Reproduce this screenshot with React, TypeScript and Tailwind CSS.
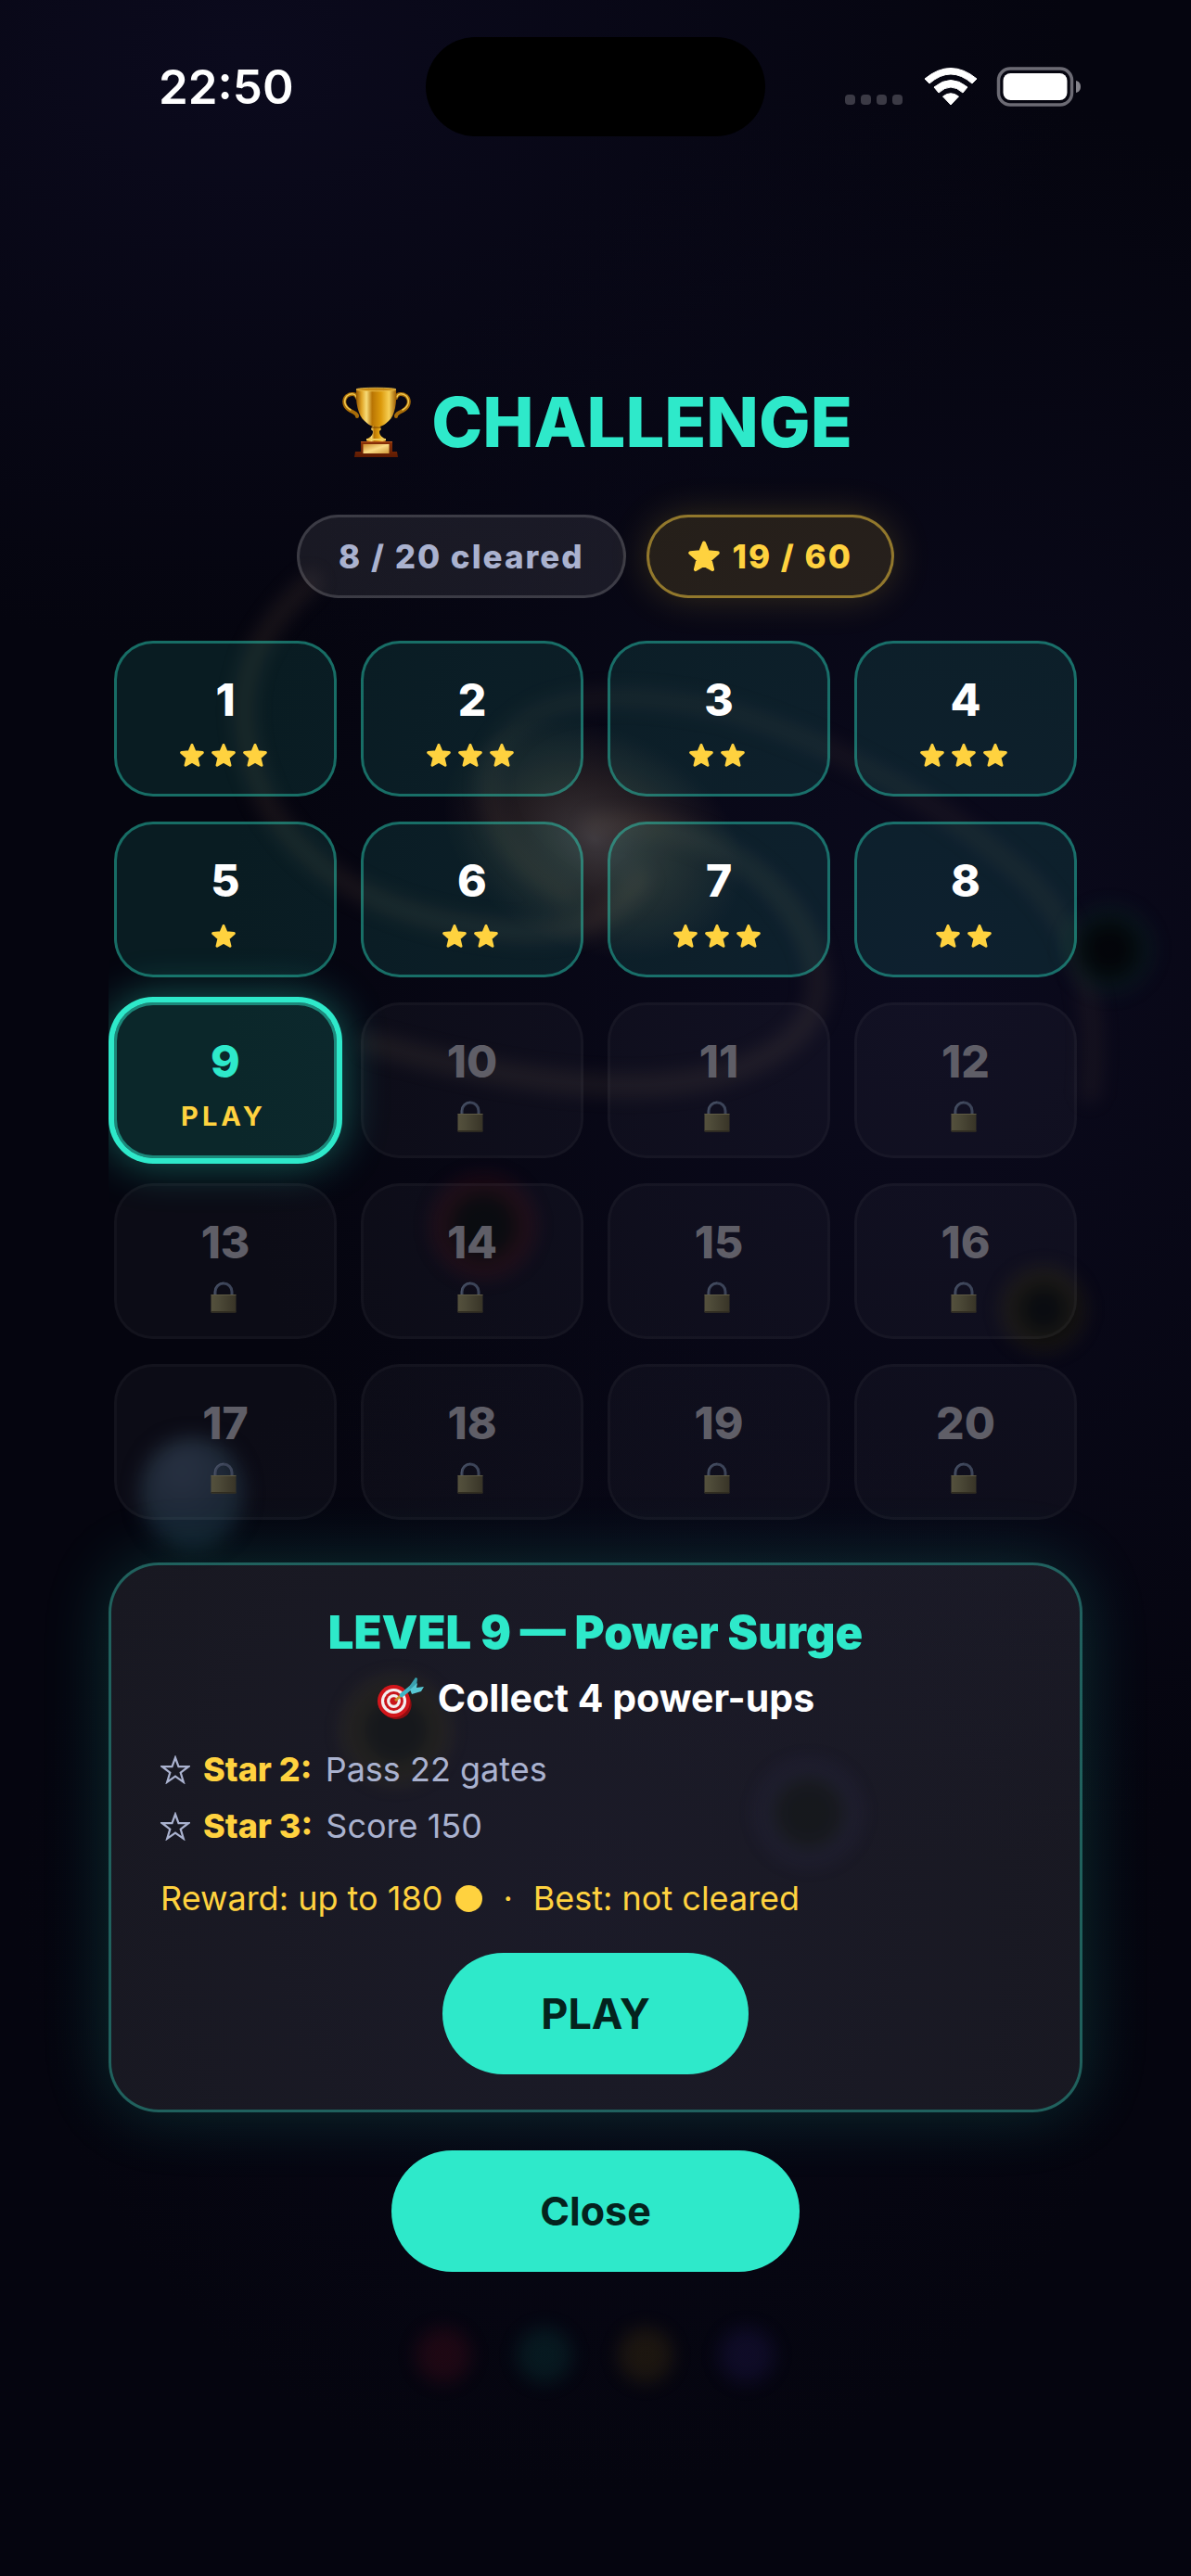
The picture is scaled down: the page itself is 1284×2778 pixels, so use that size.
import { useState } from "react";

type Level = { id: number; stars: number };

const TOTAL_LEVELS = 20;
const CURRENT_LEVEL = 9;
const STARS = [3, 3, 2, 3, 1, 2, 3, 2];

const levels: Level[] = Array.from({ length: TOTAL_LEVELS }, (_, i) => ({
  id: i + 1,
  stars: STARS[i] ?? 0,
}));

const bonusStars = [
  { label: "Star 2:", goal: "Pass 22 gates" },
  { label: "Star 3:", goal: "Score 150" },
];

function StarIcon({ className }: { className: string }) {
  return (
    <svg viewBox="0 0 26 25" className={className} aria-hidden="true">
      <path
        d="M13 1.500l3 7.300 8.300.8-6.300 5.600 2 8.100-7-4-7 4 2-8.100-6.300-5.600 8.300-.8z"
        fill="#ffd23f"
        stroke="#ffd23f"
        strokeWidth="3"
        strokeLinejoin="round"
      />
    </svg>
  );
}

function StarOutline() {
  return (
    <svg viewBox="0 0 32 31" className="h-[31px] w-8 shrink-0" aria-hidden="true">
      <path
        d="M16 2.5l3.5 9.6 10.6.1-8.4 6.4 3.1 10.2L16 22.7l-8.8 6.1 3.1-10.2-8.4-6.4 10.6-.1z"
        fill="none"
        stroke="#aab2cf"
        strokeWidth="2.2"
        strokeLinejoin="miter"
      />
    </svg>
  );
}

function LockIcon() {
  return (
    <svg viewBox="0 0 28 34" className="h-[34px] w-7" role="img" aria-label="Locked">
      <defs>
        <linearGradient id="lock-body" x1="0" x2="1" y1="0" y2="0">
          <stop offset="0" stopColor="#55513d" />
          <stop offset="0.3" stopColor="#4d4a38" />
          <stop offset="1" stopColor="#383427" />
        </linearGradient>
      </defs>
      <path d="M5 16v-5a9 9 0 0 1 18 0v5" fill="none" stroke="#3c4458" strokeWidth="3" />
      <path d="M4.300 15v-4a9.700 9.700 0 0 1 9.700-9.700" fill="none" stroke="#4b5468" strokeWidth="1" />
      <rect x="0.500" y="14" width="27" height="19.500" rx="1" fill="url(#lock-body)" />
      <rect x="0.500" y="32" width="27" height="1.500" fill="#302c20" />
      <rect x="0.500" y="14" width="27" height="1" fill="#5e5a44" />
    </svg>
  );
}

function TrophyIcon() {
  return (
    <svg viewBox="0 0 92 92" className="h-[92px] w-[92px]" aria-hidden="true">
      <defs>
        <linearGradient id="cup" x1="0" x2="1" y1="0" y2="0">
          <stop offset="0" stopColor="#8f5200" />
          <stop offset="0.14" stopColor="#e0a425" />
          <stop offset="0.26" stopColor="#f8dc78" />
          <stop offset="0.4" stopColor="#b87404" />
          <stop offset="0.62" stopColor="#dc9a0c" />
          <stop offset="0.82" stopColor="#f6cf55" />
          <stop offset="1" stopColor="#9a5a02" />
        </linearGradient>
        <linearGradient id="wood" x1="0" x2="0" y1="0" y2="1">
          <stop offset="0" stopColor="#8a3208" />
          <stop offset="1" stopColor="#5c1a02" />
        </linearGradient>
        <linearGradient id="plate" x1="0" x2="1" y1="0" y2="1">
          <stop offset="0" stopColor="#c98a2c" />
          <stop offset="0.5" stopColor="#fbdc86" />
          <stop offset="1" stopColor="#d29a3c" />
        </linearGradient>
      </defs>
      <g fill="none" strokeLinecap="round">
        <path d="M24 20c-1-5-7-5-11-2-5 5-3 12 4 16 4 2 7 3 7 6" stroke="#a86c08" strokeWidth="4" />
        <path d="M66 20c1-5 7-5 11-2 5 5 3 12-4 16-4 2-7 3-7 6" stroke="#a86c08" strokeWidth="4" />
        <path d="M23 19c-1-4-6-4-10-1-4 5-3 11 4 15" stroke="#f0c84e" strokeWidth="1.500" />
        <path d="M67 19c1-4 6-4 10-1 4 5 3 11-4 15" stroke="#f0c84e" strokeWidth="1.500" />
      </g>
      <path d="M23 11h43c1 14-1 28-8 34-4 4-7 5-9 6h-8c-2-1-5-2-9-6-7-6-10-20-9-34z" fill="url(#cup)" />
      <ellipse cx="44.500" cy="11" rx="21.500" ry="1.800" fill="#c98a14" stroke="#f0c550" strokeWidth="0.800" />
      <path d="M41 50h7l2 4-2 2c0 4 2 6 6 8l1 4H34l1-4c4-2 6-4 6-8l-2-2z" fill="url(#cup)" />
      <path d="M39 52h11" stroke="#7a4702" strokeWidth="1" />
      <path d="M34 65h21" stroke="#f2cc5c" strokeWidth="2" />
      <path d="M28 67h34v11h5l1 6H21l1-6h6z" fill="url(#wood)" />
      <path d="M28 67.500h34" stroke="#b4531c" strokeWidth="1" />
      <rect x="30.500" y="70" width="28" height="10" fill="url(#plate)" />
    </svg>
  );
}

function TargetIcon() {
  return (
    <svg viewBox="0 0 52 46" className="h-[46px] w-[52px]" aria-hidden="true">
      <ellipse cx="20" cy="29" rx="18" ry="16.500" transform="rotate(30 20 29)" fill="#8f0d10" />
      <circle cx="18.500" cy="26.500" r="17.500" fill="#d2161b" />
      <circle cx="18.500" cy="26.500" r="13.600" fill="#f3eeee" />
      <circle cx="18.500" cy="26.500" r="10.400" fill="#c9151a" />
      <circle cx="18.500" cy="26.500" r="7.400" fill="#f3eeee" />
      <circle cx="18.500" cy="26.500" r="4.200" fill="#c9151a" />
      <path d="M20 26l9-8" stroke="#c8912a" strokeWidth="3" />
      <path d="M27 20l11-9" stroke="#3fb6c6" strokeWidth="4.500" strokeLinecap="round" />
      <path d="M35 11l7-10 2 1-1 8-6 5z" fill="#3aa0ae" />
      <path d="M36 14l8-7-1 5 8-1-3 5-10 3z" fill="#56c8d4" />
    </svg>
  );
}

function StatusIcons() {
  return (
    <div className="flex items-center">
      <div className="mt-7 flex gap-1.5 pr-6 [&>i]:h-[11px] [&>i]:w-[11px] [&>i]:rounded [&>i]:bg-[#3b3a45]">
        <i />
        <i />
        <i />
        <i />
      </div>
      <svg viewBox="0 0 168 44" className="h-11 w-[168px]" role="img" aria-label="Wi-Fi, battery full">
        <path d="M0 13Q28-10 56 13l-5 5Q28-2 5 18z" fill="#fff" stroke="#fff" strokeWidth="1" strokeLinejoin="round" />
        <path d="M10 22Q28 7 46 22l-5 6Q28 16 15 28z" fill="#fff" stroke="#fff" strokeWidth="1" strokeLinejoin="round" />
        <path d="M19.500 32Q28 25.500 36.500 32L28 41z" fill="#fff" stroke="#fff" strokeWidth="1" strokeLinejoin="round" />
        <rect x="79.500" y="2" width="79" height="39" rx="12.500" fill="none" stroke="#6c6b74" strokeWidth="3.500" />
        <rect x="84.500" y="7" width="69" height="29" rx="8" fill="#fff" />
        <path d="M163 15c4 1 5 4 5 6.500s-1 5.500-5 6.500z" fill="#84838b" />
      </svg>
    </div>
  );
}

const orbs = [
  { x: 1196, y: 1024, r: 38, color: "#0f6b55", alpha: 0.12 },
  { x: 521, y: 1322, r: 46, color: "#8a1424", alpha: 0.17 },
  { x: 1125, y: 1412, r: 36, color: "#6b5a14", alpha: 0.16 },
  { x: 427, y: 1866, r: 48, color: "#6b5a14", alpha: 0.15 },
  { x: 872, y: 1955, r: 46, color: "#3a2f80", alpha: 0.12 },
];

const dots = [
  { x: 478, color: "#b01828" },
  { x: 587, color: "#0f8f7c" },
  { x: 696, color: "#a07a10" },
  { x: 805, color: "#4a2fb0" },
];

/* Blurred galaxy and game pieces behind the menu */
function Backdrop() {
  return (
    <svg
      viewBox="0 0 1284 2778"
      preserveAspectRatio="xMidYMid slice"
      className="absolute inset-0 h-full w-full"
      aria-hidden="true"
    >
      <defs>
        <radialGradient id="sky">
          <stop offset="0" stopColor="#0b0a1d" />
          <stop offset="1" stopColor="#0b0a1d" stopOpacity="0" />
        </radialGradient>
        <radialGradient id="core">
          <stop offset="0" stopColor="#8a8078" stopOpacity="0.4" />
          <stop offset="0.5" stopColor="#80664a" stopOpacity="0.22" />
          <stop offset="1" stopColor="#80664a" stopOpacity="0" />
        </radialGradient>
        <radialGradient id="moon" cx="0.4" cy="0.3" r="0.7">
          <stop offset="0" stopColor="#212b3c" />
          <stop offset="1" stopColor="#101c2a" />
        </radialGradient>
        <filter id="soft" x="-50%" y="-50%" width="200%" height="200%" colorInterpolationFilters="sRGB">
          <feGaussianBlur stdDeviation="10" />
        </filter>
      </defs>
      <rect width="1284" height="2778" fill="#05050f" />
      <ellipse cx="260" cy="60" rx="900" ry="640" fill="url(#sky)" />
      <ellipse cx="1000" cy="1050" rx="760" ry="960" fill="url(#sky)" />
      <ellipse cx="640" cy="2050" rx="620" ry="640" fill="url(#sky)" opacity="0.5" />

      <g fill="none" filter="url(#soft)" strokeLinecap="round">
        <path
          d="M335 628C265 690 240 760 287 865C340 960 450 1000 573 1005C640 1005 670 980 690 950"
          stroke="#b08060"
          strokeOpacity="0.12"
          strokeWidth="22"
        />
        <path
          d="M610 965C550 930 515 880 530 820C560 750 650 740 778 765C900 800 1020 870 1105 945C1170 1010 1185 1080 1175 1180"
          stroke="#b09060"
          strokeOpacity="0.08"
          strokeWidth="22"
        />
        <path
          d="M640 890C740 880 830 930 870 1010C905 1090 860 1130 790 1155C700 1185 560 1170 400 1125"
          stroke="#b09070"
          strokeOpacity="0.1"
          strokeWidth="24"
        />
      </g>
      <ellipse cx="640" cy="905" rx="170" ry="120" transform="rotate(25 640 905)" fill="url(#core)" />

      {orbs.map((o) => (
        <g key={`${o.x}-${o.y}`} filter="url(#soft)">
          <circle cx={o.x} cy={o.y} r={o.r} fill="#030509" fillOpacity="0.9" />
          <circle cx={o.x} cy={o.y} r={o.r} fill="none" stroke={o.color} strokeOpacity={o.alpha} strokeWidth="20" />
        </g>
      ))}
      <ellipse cx="207" cy="1610" rx="56" ry="60" fill="url(#moon)" filter="url(#soft)" />
      {dots.map((d) => (
        <circle key={d.x} cx={d.x} cy="2540" r="30" fill={d.color} fillOpacity="0.14" filter="url(#soft)" />
      ))}
    </svg>
  );
}

function LevelCard({ level, onSelect }: { level: Level; onSelect: (id: number) => void }) {
  const current = level.id === CURRENT_LEVEL;
  const locked = level.id > CURRENT_LEVEL;

  let look = "border-[#2ee9ca]/40 bg-[#2ee9ca]/10 text-white";
  if (current) {
    look =
      "border-[#2ee9ca]/50 bg-[#2ee9ca]/15 text-[#2ee9ca] shadow-[0_0_0_6px_#2ee9ca,0_0_48px_6px_rgba(46,233,202,0.4)]";
  }
  if (locked) {
    look = "border-white/3 bg-white/3 text-[#5f5e67]";
  }

  return (
    <button
      type="button"
      disabled={locked}
      onClick={() => onSelect(level.id)}
      className={`flex h-[168px] flex-col items-center gap-3 rounded-[42px] border-[3px] pt-8 ${look}`}
    >
      <span className="text-[48px] leading-[58px] font-extrabold">{level.id}</span>
      <span className="flex h-9 items-center gap-2 pr-1">
        {current && (
          <span className="text-[29px] leading-9 font-bold tracking-[4px] text-[#ffd23f]">PLAY</span>
        )}
        {locked && <LockIcon />}
        {!current &&
          !locked &&
          Array.from({ length: level.stars }, (_, i) => (
            <StarIcon key={i} className="h-[25px] w-[26px]" />
          ))}
      </span>
    </button>
  );
}

export default function App() {
  const [, setSelected] = useState(CURRENT_LEVEL);

  return (
    <div className="relative min-h-screen bg-[#05050f] font-['Inter',sans-serif] text-white">
      <Backdrop />

      <div className="relative">
        {/* Status bar */}
        <header className="grid grid-cols-[1fr_366px_1fr] items-center pt-10">
          <span className="pl-[171px] text-[51px] leading-[64px] font-semibold">22:50</span>
          <div className="h-[107px] rounded-full bg-black" />
          <div className="flex justify-end pr-[119px]">
            <StatusIcons />
          </div>
        </header>

        <main className="flex flex-col items-center px-[117px] pt-[262px] pb-20">
          <h1 className="flex items-center gap-3 pr-1 text-[74px] leading-[90px] font-extrabold text-[#2ee9ca]">
            <TrophyIcon />
            CHALLENGE
          </h1>

          {/* Progress */}
          <div className="mt-[54px] flex gap-[22px] text-[35px] leading-[84px] font-extrabold tracking-[2px]">
            <span className="rounded-full border-[3px] border-white/15 bg-white/8 px-[42px] text-[#aab2cf]">
              8 / 20 cleared
            </span>
            <span className="flex items-center gap-3.5 rounded-full border-[3px] border-[#ffd23f]/50 bg-[#ffd23f]/12 px-[42px] text-[#ffd23f] shadow-[0_0_42px_rgba(255,210,63,0.18)]">
              <StarIcon className="h-[34px] w-[34px]" />
              19 / 60
            </span>
          </div>

          {/* Level grid */}
          <div className="mt-10 grid w-full grid-cols-4 gap-x-[26px] gap-y-[27px] overflow-hidden p-1.5">
            {levels.map((level) => (
              <LevelCard key={level.id} level={level} onSelect={setSelected} />
            ))}
          </div>

          {/* Selected level */}
          <section className="mt-10 flex w-full flex-col items-center rounded-[54px] border-[3px] border-[#2ee9ca]/35 bg-white/8 px-[53px] pt-11 pb-[38px] shadow-[0_0_72px_rgba(46,233,202,0.18)]">
            <h2 className="text-[49px] leading-[58px] font-black text-[#2ee9ca]">
              LEVEL 9 — Power Surge
            </h2>
            <p className="mt-4 flex items-center gap-3.5 text-[41px] leading-[50px] font-bold">
              <TargetIcon />
              Collect 4 power-ups
            </p>

            <ul className="mt-[26px] flex w-full flex-col gap-2 text-[36px] leading-[53px] text-[#aab2cf]">
              {bonusStars.map((s) => (
                <li key={s.label} className="flex items-center gap-3.5">
                  <StarOutline />
                  <span>
                    <b className="mr-1 font-extrabold text-[#ffd23f]">{s.label}</b> {s.goal}
                  </span>
                </li>
              ))}
            </ul>

            <p className="mt-6 flex w-full items-center gap-3.5 text-[36px] leading-[54px] text-[#ffd23f]">
              Reward: up to 180
              <span className="h-[29px] w-[29px] rounded-full bg-[#ffd23f]" />
              <span className="px-2">·</span>
              Best: not cleared
            </p>

            <button
              type="button"
              className="mt-8 rounded-full bg-[#2ee9ca] px-[106px] text-[45px] leading-[131px] font-bold text-[#04231d]"
            >
              PLAY
            </button>
          </section>

          <button
            type="button"
            className="mt-[41px] rounded-full bg-[#2ee9ca] px-[160px] text-[43px] leading-[131px] font-bold text-[#04231d]"
          >
            Close
          </button>
        </main>
      </div>
    </div>
  );
}
